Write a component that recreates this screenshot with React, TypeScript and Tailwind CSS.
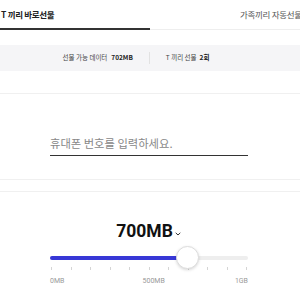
import React from 'react';

const ticks = Array.from({ length: 11 });

const App: React.FC = () => {
  return (
    <div className="w-[300px] h-[300px] overflow-hidden bg-white font-['Noto_Sans_CJK_KR',sans-serif]">
      {/* tabs */}
      <div className="flex h-[30px]">
        <div className="w-[150px] flex items-center border-b-2 border-[#333]">
          <span className="pl-[1px] text-[8.5px] font-bold tracking-[-0.3px] text-[#222] whitespace-nowrap">T 끼리 바로선물</span>
        </div>
        <div className="w-[150px] flex items-center border-b border-[#eee] pb-[1px] overflow-hidden">
          <span className="pl-[90px] text-[8.5px] tracking-[-0.3px] text-[#555] whitespace-nowrap">가족끼리 자동선물</span>
        </div>
      </div>

      {/* info band */}
      <div className="mt-[15px] h-[26px] bg-[#f5f5f7] flex items-center justify-center text-[6.5px] text-[#444]">
        <div className="flex items-center gap-[4px] pl-[14px]">
          <span>선물 가능 데이터</span>
          <span className="font-bold text-[#222]">702MB</span>
        </div>
        <div className="w-px h-[12px] bg-[#e2e2e2] mx-[16px]" />
        <div className="flex items-center gap-[3px] pr-[42px]">
          <span>T 끼리 선물</span>
          <span className="font-bold text-[#222]">2회</span>
        </div>
      </div>

      {/* phone input */}
      <div className="h-[23px] border-b border-[#f0f0f0]" />
      <div className="h-[86px] border-b border-[#f0f0f0] flex flex-col items-center pt-[35px]">
        <div className="w-[198px] ml-[-2px] border-b-[1.5px] border-[#333] pb-[2px]">
          <span className="text-[11.3px] text-[#888] whitespace-nowrap">휴대폰 번호를 입력하세요.</span>
        </div>
      </div>

      {/* data slider */}
      <div className="mt-[11px] border-t border-[#f0f0f0] flex flex-col items-center">
        <div className="mt-[31px] flex items-center ml-[-3px]">
          <span className="font-['Roboto',sans-serif] font-bold text-[17.5px] leading-none text-[#111]">700MB</span>
          <svg width="6" height="4" viewBox="0 0 6 4" className="ml-[2px] mt-[4px]">
            <path d="M0.7 0.8 L3 3 L5.3 0.8" fill="none" stroke="#333" strokeWidth="1" />
          </svg>
        </div>
        <div className="mt-[15px] w-[198px] ml-[-2px]">
          <div className="relative h-[4px] rounded-full bg-[#eeeeee]">
            <div className="h-[4px] rounded-full bg-[#3737d6] w-[65%]" />
            <div className="absolute left-[126px] top-[-9.5px] w-[23px] h-[23px] rounded-full bg-white border border-[#ddd] shadow-[0_1px_3px_rgba(0,0,0,0.15)]" />
          </div>
          <div className="mt-[7px] flex justify-between px-[1px]">
            {ticks.map((_, i) => (
              <div key={i} className="w-px h-[3px] bg-[#d5d5d5]" />
            ))}
          </div>
          <div className="mt-[8px] flex justify-between font-['Roboto',sans-serif] text-[7px] text-[#999] leading-none">
            <span>0MB</span>
            <span className="ml-[8px]">500MB</span>
            <span>1GB</span>
          </div>
        </div>
      </div>
    </div>
  );
};

export default App;
